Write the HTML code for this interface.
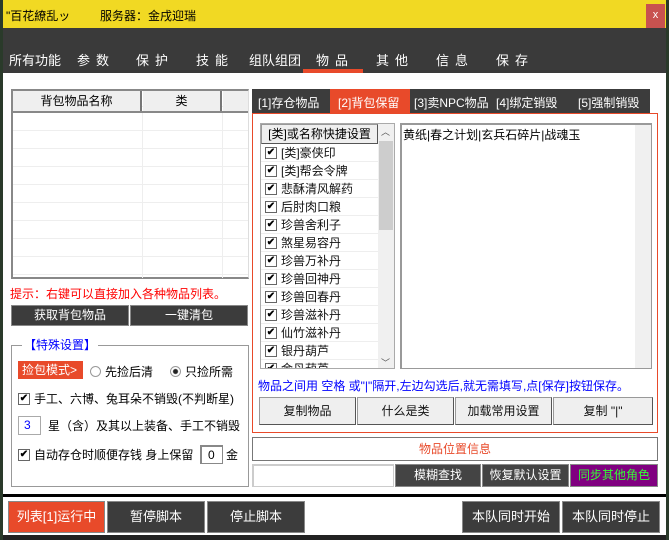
<!DOCTYPE html>
<html><head><meta charset="utf-8"><style>
*{box-sizing:border-box;margin:0;padding:0}
body{width:669px;height:540px;overflow:hidden;background:#2a3a2a;font-family:"Liberation Sans","Noto Sans CJK SC",sans-serif;font-size:12px;position:relative}
.a{position:absolute}
.btnd{position:absolute;background:#3c3c3c;color:#fff;border:1px solid #888;text-align:center;font-size:12px}
.btnl{position:absolute;background:#efefef;color:#111;border:1px solid #999;border-right-color:#555;border-bottom-color:#555;text-align:center;font-size:12px}
.cb{display:inline-block;width:12px;height:12px;border:1px solid #666;background:#fff;vertical-align:middle;position:relative;top:-1px;margin-right:4px;font-size:10px;line-height:10px;text-align:center;color:#000;font-weight:bold}
.li{height:18px;line-height:18px;border-bottom:1px solid #eee;padding-left:4px;font-size:12px;color:#111;white-space:nowrap}
</style></head><body>
<div class="a" style="left:3px;top:0;width:663px;height:538px;background:#fff"></div>
<div class="a" style="left:3px;top:0;width:663px;height:28px;background:#f1d923"></div>
<div class="a" style="left:6px;top:7px;font-size:12px;color:#000">"百花繚乱ッ</div>
<div class="a" style="left:100px;top:7px;font-size:12px;color:#000">服务器：金戌迎瑞</div>
<div class="a" style="left:646px;top:4px;width:19px;height:24px;background:#c8524f;color:#fff;text-align:center;line-height:22px;font-size:11px">x</div>
<div class="a" style="left:3px;top:28px;width:663px;height:45px;background:#3a3a3a"></div>
<div class="a" style="left:9px;top:50px;color:#fff;font-size:13px">所有功能</div>
<div class="a" style="left:77px;top:50px;color:#fff;font-size:13px;letter-spacing:6px">参数</div>
<div class="a" style="left:136px;top:50px;color:#fff;font-size:13px;letter-spacing:6px">保护</div>
<div class="a" style="left:196px;top:50px;color:#fff;font-size:13px;letter-spacing:6px">技能</div>
<div class="a" style="left:249px;top:50px;color:#fff;font-size:13px">组队组团</div>
<div class="a" style="left:316px;top:50px;color:#fff;font-size:13px;letter-spacing:6px">物品</div>
<div class="a" style="left:376px;top:50px;color:#fff;font-size:13px;letter-spacing:6px">其他</div>
<div class="a" style="left:436px;top:50px;color:#fff;font-size:13px;letter-spacing:6px">信息</div>
<div class="a" style="left:496px;top:50px;color:#fff;font-size:13px;letter-spacing:6px">保存</div>
<div class="a" style="left:303px;top:69px;width:60px;height:4px;background:#e84a2a"></div>

<div class="a" style="left:11px;top:89px;width:238px;height:190px;border:2px solid #888;border-right:1px solid #ddd;background:#fff;
background-image:repeating-linear-gradient(#fff 0,#fff 17px,#eee 17px,#eee 18px);background-position:0 22px"></div>
<div class="a" style="left:13px;top:91px;width:129px;height:20px;background:#efefef;border-right:2px solid #777;text-align:center;line-height:20px;font-size:12px">背包物品名称</div>
<div class="a" style="left:143px;top:91px;width:79px;height:20px;background:#efefef;border-right:2px solid #777;text-align:center;line-height:20px">类</div>
<div class="a" style="left:223px;top:91px;width:25px;height:20px;background:#efefef"></div>
<div class="a" style="left:13px;top:111px;width:235px;height:2px;background:#888"></div>
<div class="a" style="left:142px;top:113px;width:1px;height:165px;background:#eee"></div>
<div class="a" style="left:222px;top:113px;width:1px;height:165px;background:#eee"></div>
<div class="a" style="left:10px;top:285px;color:#f00;font-size:12px">提示：右键可以直接加入各种物品列表。</div>
<div class="btnd" style="left:11px;top:305px;width:118px;height:21px;line-height:19px">获取背包物品</div>
<div class="btnd" style="left:130px;top:305px;width:118px;height:21px;line-height:19px">一键清包</div>
<div class="a" style="left:11px;top:345px;width:238px;height:142px;border:1px solid #999"></div>
<div class="a" style="left:22px;top:336px;background:#fff;color:#00f;padding:0 2px;font-size:12px">【特殊设置】</div>
<div class="a" style="left:18px;top:361px;width:65px;height:18px;background:#e84a2a;color:#fff;line-height:18px;padding-left:4px">捡包模式&gt;</div>
<div class="a" style="left:90px;top:363px;font-size:12px"><span style="display:inline-block;width:11px;height:11px;border:1px solid #999;border-radius:50%;vertical-align:-1px;margin-right:4px"></span>先捡后清</div>
<div class="a" style="left:170px;top:363px;font-size:12px"><span style="display:inline-block;width:11px;height:11px;border:1px solid #999;border-radius:50%;vertical-align:-1px;margin-right:4px;background:radial-gradient(#222 2px,#fff 3px)"></span>只捡所需</div>
<div class="a" style="left:18px;top:390px;font-size:12px"><span class="cb">✔</span>手工、六博、兔耳朵不销毁(不判断星)</div>
<div class="a" style="left:18px;top:416px;width:23px;height:19px;border:1px solid #aaa;color:#00f;line-height:17px;padding-left:5px">3</div>
<div class="a" style="left:48px;top:417px;font-size:12px">星（含）及其以上装备、手工不销毁</div>
<div class="a" style="left:18px;top:446px;font-size:12px"><span class="cb">✔</span>自动存仓时顺便存钱 身上保留</div>
<div class="a" style="left:200px;top:445px;width:23px;height:19px;border:1px solid #888;border-width:2px 1px 1px 2px;line-height:16px;padding-left:6px">0</div>
<div class="a" style="left:226px;top:446px;font-size:12px">金</div>

<div class="a" style="left:252px;top:89px;width:398px;height:24px;background:#3c3c3c"></div>
<div class="a" style="left:258px;top:94px;color:#fff;font-size:12px">[1]存仓物品</div>
<div class="a" style="left:330px;top:89px;width:80px;height:24px;background:#e84a2a"></div>
<div class="a" style="left:338px;top:94px;color:#fff;font-size:12px">[2]背包保留</div>
<div class="a" style="left:414px;top:94px;color:#fff;font-size:12px">[3]卖NPC物品</div>
<div class="a" style="left:496px;top:94px;color:#fff;font-size:12px">[4]绑定销毁</div>
<div class="a" style="left:578px;top:94px;color:#fff;font-size:12px">[5]强制销毁</div>
<div class="a" style="left:252px;top:113px;width:406px;height:320px;border:1px solid #e84a2a"></div>
<div class="a" style="left:260px;top:123px;width:135px;height:246px;border:1px solid #aaa;overflow:hidden;background:#fff">
<div style="width:117px;height:20px;background:#efefef;border:1px solid #999;border-right-color:#555;border-bottom-color:#555;text-align:center;line-height:18px">[类]或名称快捷设置</div>
<div class="li" style="width:117px"><span class="cb">✔</span>[类]豪侠印</div>
<div class="li" style="width:117px"><span class="cb">✔</span>[类]帮会令牌</div>
<div class="li" style="width:117px"><span class="cb">✔</span>悲酥清风解药</div>
<div class="li" style="width:117px"><span class="cb">✔</span>后肘肉口粮</div>
<div class="li" style="width:117px"><span class="cb">✔</span>珍兽舍利子</div>
<div class="li" style="width:117px"><span class="cb">✔</span>煞星易容丹</div>
<div class="li" style="width:117px"><span class="cb">✔</span>珍兽万补丹</div>
<div class="li" style="width:117px"><span class="cb">✔</span>珍兽回神丹</div>
<div class="li" style="width:117px"><span class="cb">✔</span>珍兽回春丹</div>
<div class="li" style="width:117px"><span class="cb">✔</span>珍兽滋补丹</div>
<div class="li" style="width:117px"><span class="cb">✔</span>仙竹滋补丹</div>
<div class="li" style="width:117px"><span class="cb">✔</span>银丹葫芦</div>
<div class="li" style="width:117px"><span class="cb">✔</span>金丹葫芦</div>
</div>
<div class="a" style="left:378px;top:124px;width:16px;height:244px;background:#f0f0f0"></div>
<div class="a" style="left:379px;top:141px;width:14px;height:89px;background:#cdcdcd"></div>
<div class="a" style="left:381px;top:125px;font-size:9px;color:#555">︿</div>
<div class="a" style="left:381px;top:356px;font-size:9px;color:#555">﹀</div>
<div class="a" style="left:400px;top:123px;width:252px;height:246px;border:1px solid #999;border-width:2px 1px 1px 2px;background:#fff"></div>
<div class="a" style="left:635px;top:125px;width:16px;height:243px;background:#f0f0f0"></div>
<div class="a" style="left:403px;top:126px;font-size:12px">黄纸|春之计划|玄兵石碎片|战魂玉</div>
<div class="a" style="left:258px;top:377px;color:#00f;font-size:12px;white-space:nowrap">物品之间用 空格 或"|"隔开,左边勾选后,就无需填写,点[保存]按钮保存。</div>
<div class="btnl" style="left:259px;top:397px;width:97px;height:28px;line-height:26px">复制物品</div>
<div class="btnl" style="left:357px;top:397px;width:97px;height:28px;line-height:26px">什么是类</div>
<div class="btnl" style="left:455px;top:397px;width:97px;height:28px;line-height:26px">加载常用设置</div>
<div class="btnl" style="left:553px;top:397px;width:100px;height:28px;line-height:26px">复制 "|"</div>
<div class="a" style="left:252px;top:437px;width:406px;height:24px;border:1px solid #777;color:#e84a2a;text-align:center;line-height:22px">物品位置信息</div>
<div class="a" style="left:252px;top:464px;width:142px;height:23px;border:1px solid #ccc;border-width:2px 1px 1px 2px"></div>
<div class="btnd" style="left:395px;top:464px;width:86px;height:23px;line-height:21px;background:#444">模糊查找</div>
<div class="btnd" style="left:482px;top:464px;width:87px;height:23px;line-height:21px;background:#444">恢复默认设置</div>
<div class="btnd" style="left:570px;top:464px;width:88px;height:23px;line-height:21px;background:#800080;color:#3f3">同步其他角色</div>

<div class="a" style="left:3px;top:494px;width:663px;height:3px;background:#000"></div>
<div class="btnd" style="left:8px;top:501px;width:97px;height:32px;line-height:30px;background:#e84a2a;font-size:13px">列表[1]运行中</div>
<div class="btnd" style="left:107px;top:501px;width:98px;height:32px;line-height:30px;font-size:13px">暂停脚本</div>
<div class="btnd" style="left:207px;top:501px;width:98px;height:32px;line-height:30px;font-size:13px">停止脚本</div>
<div class="btnd" style="left:462px;top:501px;width:98px;height:32px;line-height:30px;font-size:13px">本队同时开始</div>
<div class="btnd" style="left:562px;top:501px;width:98px;height:32px;line-height:30px;font-size:13px">本队同时停止</div>
<div class="a" style="left:3px;top:535px;width:663px;height:5px;background:#222"></div>
</body></html>
